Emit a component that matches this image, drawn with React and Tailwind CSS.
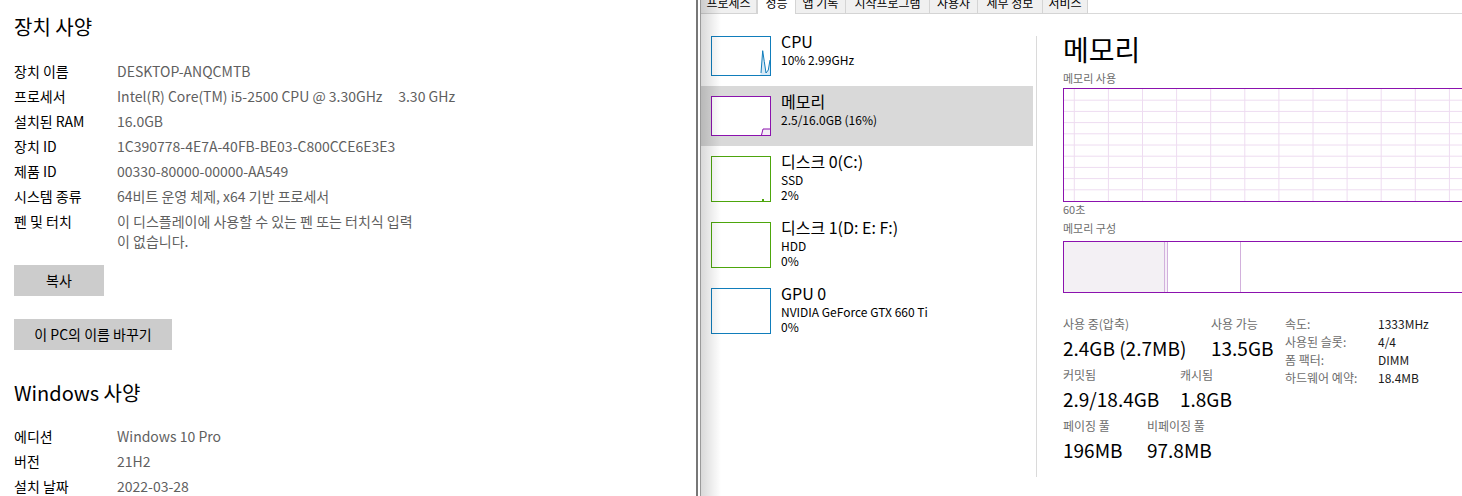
import React from "react";

const font = "font-['Noto_Sans_CJK_KR',sans-serif]";

const deviceSpecs = [
  ["장치 이름", "DESKTOP-ANQCMTB"],
  ["프로세서", "Intel(R) Core(TM) i5-2500 CPU @ 3.30GHz     3.30 GHz"],
  ["설치된 RAM", "16.0GB"],
  ["장치 ID", "1C390778-4E7A-40FB-BE03-C800CCE6E3E3"],
  ["제품 ID", "00330-80000-00000-AA549"],
  ["시스템 종류", "64비트 운영 체제, x64 기반 프로세서"],
];

const winSpecs = [
  ["에디션", "Windows 10 Pro"],
  ["버전", "21H2"],
  ["설치 날짜", "2022-03-28"],
];

const tabs = [
  ["프로세스", "w-[56px]"],
  ["성능", "w-[39px]"],
  ["앱 기록", "w-[50px]"],
  ["시작프로그램", "w-[84px]"],
  ["사용자", "w-[48px]"],
  ["세부 정보", "w-[65px]"],
  ["서비스", "w-[45px]"],
];

function SpecRow({ label, value }) {
  return (
    <div className="flex text-[14px] leading-[20px]">
      <div className="w-[103px] shrink-0 text-black">{label}</div>
      <div className="text-[#5f5f5f] whitespace-pre">{value}</div>
    </div>
  );
}

function SystemPanel() {
  return (
    <div className="w-[696px] shrink-0 bg-white pl-[14px] pt-[13px]">
      <h1 className="text-[20px] leading-[28px] text-black">장치 사양</h1>
      <div className="mt-[20px] flex flex-col gap-[5px]">
        {deviceSpecs.map(([l, v]) => (
          <SpecRow key={l} label={l} value={v} />
        ))}
        <div className="flex text-[14px] leading-[20px]">
          <div className="w-[103px] shrink-0 text-black">펜 및 터치</div>
          <div className="text-[#5f5f5f]">
            이 디스플레이에 사용할 수 있는 펜 또는 터치식 입력
            <br />이 없습니다.
          </div>
        </div>
      </div>
      <button className="mt-[14px] block w-[90px] h-[31px] bg-[#cccccc] text-[14px] text-black">
        복사
      </button>
      <button className="mt-[23px] block w-[158px] h-[31px] bg-[#cccccc] text-[14px] text-black">
        이 PC의 이름 바꾸기
      </button>
      <h2 className="mt-[29px] text-[20px] leading-[28px] text-black">Windows 사양</h2>
      <div className="mt-[19px] flex flex-col gap-[5px]">
        {winSpecs.map(([l, v]) => (
          <SpecRow key={l} label={l} value={v} />
        ))}
      </div>
    </div>
  );
}

function Thumb({ color, h, children }) {
  return (
    <div
      className={`relative w-[60px] shrink-0 border bg-white ${h}`}
      style={{ borderColor: color }}
    >
      {children}
    </div>
  );
}

function ListItem({ selected, color, tall, title, lines, graph }) {
  return (
    <div
      className={`flex pl-[10px] pt-[10px] ${tall ? "h-[66px]" : "h-[60px]"} ${
        selected ? "bg-[#d9d9d9]" : ""
      } w-[332px]`}
    >
      <Thumb color={color} h={tall ? "h-[46px]" : "h-[40px]"}>
        {graph}
      </Thumb>
      <div className="ml-[10px] -mt-[5px] text-black">
        <div className="text-[16px] leading-[21px]">{title}</div>
        {lines.map((t) => (
          <div key={t} className="text-[12px] leading-[15px]">
            {t}
          </div>
        ))}
      </div>
    </div>
  );
}

function MemoryGraph() {
  const vlines = [];
  for (let i = 0; i < 13; i++) vlines.push(10.3 + i * 34.1);
  const hlines = [];
  for (let i = 1; i < 10; i++) hlines.push(i * 11.2);
  return (
    <div className="w-[430px] h-[114px] shrink-0 border border-[#8b12ae] bg-white">
      <svg width="428" height="112" className="block">
        {hlines.map((y) => (
          <line key={"h" + y} x1="0" x2="428" y1={y} y2={y} stroke="#eedcf1" strokeWidth="1" />
        ))}
        {vlines.map((x) => (
          <line key={"v" + x} x1={x} x2={x} y1="0" y2="112" stroke="#eedcf1" strokeWidth="1" />
        ))}
      </svg>
    </div>
  );
}

function Stat({ label, value, w }) {
  return (
    <div className={`${w} shrink-0`}>
      <div className="text-[12px] leading-[16px] text-[#6d6d6d]">{label}</div>
      <div className="mt-[2px] text-[19px] leading-[28px] text-black whitespace-nowrap">{value}</div>
    </div>
  );
}

function MemoryPane() {
  const info = [
    ["속도:", "1333MHz"],
    ["사용된 슬롯:", "4/4"],
    ["폼 팩터:", "DIMM"],
    ["하드웨어 예약:", "18.4MB"],
  ];
  return (
    <div className="flex-1 min-w-0 pl-[26px] pt-[17px]">
      <div className="text-[28px] leading-[36px] text-black">메모리</div>
      <div className="mt-[4px] text-[11px] leading-[14px] text-[#6d6d6d]">메모리 사용</div>
      <div className="mt-[3px]">
        <MemoryGraph />
      </div>
      <div className="text-[11px] leading-[14px] text-[#6d6d6d]">60초</div>
      <div className="mt-[5px] text-[11px] leading-[14px] text-[#6d6d6d]">메모리 구성</div>
      <div className="mt-[6px] flex w-[430px] h-[52px] border border-[#8b12ae] bg-white">
        <div className="w-[100px] bg-[#f3f0f4]" />
        <div className="w-[4px] border-x border-[#d2b0dc] bg-[#f6eff8]" />
        <div className="w-[73px] border-r border-[#d2b0dc]" />
        <div className="flex-1" />
      </div>
      <div className="mt-[23px] flex items-start">
        <div className="w-[222px] shrink-0 flex flex-col gap-[5px]">
          <div className="flex">
            <Stat w="w-[148px]" label="사용 중(압축)" value="2.4GB (2.7MB)" />
            <Stat w="w-[70px]" label="사용 가능" value="13.5GB" />
          </div>
          <div className="flex">
            <Stat w="w-[117px]" label="커밋됨" value="2.9/18.4GB" />
            <Stat w="w-[80px]" label="캐시됨" value="1.8GB" />
          </div>
          <div className="flex">
            <Stat w="w-[84px]" label="페이징 풀" value="196MB" />
            <Stat w="w-[100px]" label="비페이징 풀" value="97.8MB" />
          </div>
        </div>
        <div className="-mt-[1px] flex flex-col text-[12px] leading-[18px]">
          {info.map(([l, v]) => (
            <div key={l} className="flex">
              <div className="w-[93px] text-[#6d6d6d]">{l}</div>
              <div className="text-[#1a1a1a]">{v}</div>
            </div>
          ))}
        </div>
      </div>
    </div>
  );
}

function TaskManager() {
  return (
    <div className="relative flex-1 min-w-0 bg-white border-l border-[#9a9a9a] overflow-hidden">
      <div className="flex h-[14px] overflow-hidden">
        {tabs.map(([t, w]) => {
          const sel = t === "성능";
          return (
            <div
              key={t}
              className={`${w} shrink-0 h-[14px] border-r border-[#d4d4d4] ${
                sel ? "bg-white border-l" : "bg-[#f0f0f0] border-b"
              }`}
            >
              <div className="-mt-[8px] h-[22px] flex items-center justify-center text-[12px] text-black whitespace-nowrap">
                {t}
              </div>
            </div>
          );
        })}
        <div className="flex-1 border-b border-[#d9d9d9]" />
      </div>
      <div className="flex">
        <div className="w-[335px] shrink-0 pt-[12px]">
          <ListItem
            color="#117dbb"
            title="CPU"
            lines={["10% 2.99GHz"]}
            graph={
              <svg width="58" height="38" className="block">
                <polygon
                  points="48,38 49,36 50.7,13.7 52.3,24.7 54,36 56.3,33 58,23 58,38"
                  fill="#d7e9f6"
                />
                <polyline
                  points="49,36 50.7,13.7 52.3,24.7 54,36 56.3,33 58,23"
                  fill="none"
                  stroke="#117dbb"
                  strokeWidth="1"
                />
              </svg>
            }
          />
          <ListItem
            selected
            color="#8b12ae"
            title="메모리"
            lines={["2.5/16.0GB (16%)"]}
            graph={
              <svg width="58" height="38" className="block">
                <polygon points="49.5,38 51,32 58,32 58,38" fill="#f4eef6" />
                <polyline points="49.5,38 51,32 58,32" fill="none" stroke="#8b12ae" strokeWidth="1" />
              </svg>
            }
          />
          <ListItem
            tall
            color="#4da60c"
            title="디스크 0(C:)"
            lines={["SSD", "2%"]}
            graph={
              <svg width="58" height="44" className="block">
                <rect x="50" y="42" width="2" height="2" fill="#4da60c" />
              </svg>
            }
          />
          <ListItem tall color="#4da60c" title="디스크 1(D: E: F:)" lines={["HDD", "0%"]} />
          <ListItem tall color="#117dbb" title="GPU 0" lines={["NVIDIA GeForce GTX 660 Ti", "0%"]} />
        </div>
        <div className="mt-[22px] h-[441px] w-[1px] shrink-0 bg-[#dadada]" />
        <MemoryPane />
      </div>
      <div className="pointer-events-none absolute left-0 top-0 h-full w-[20px] bg-gradient-to-r from-[#000000]/15 to-transparent" />
    </div>
  );
}

export default function App() {
  return (
    <div className={`flex w-[1462px] h-[496px] overflow-hidden bg-white ${font}`}>
      <SystemPanel />
      <div className="w-[2px] shrink-0 bg-[#777777]" />
      <div className="w-[2px] shrink-0 bg-white" />
      <TaskManager />
    </div>
  );
}
